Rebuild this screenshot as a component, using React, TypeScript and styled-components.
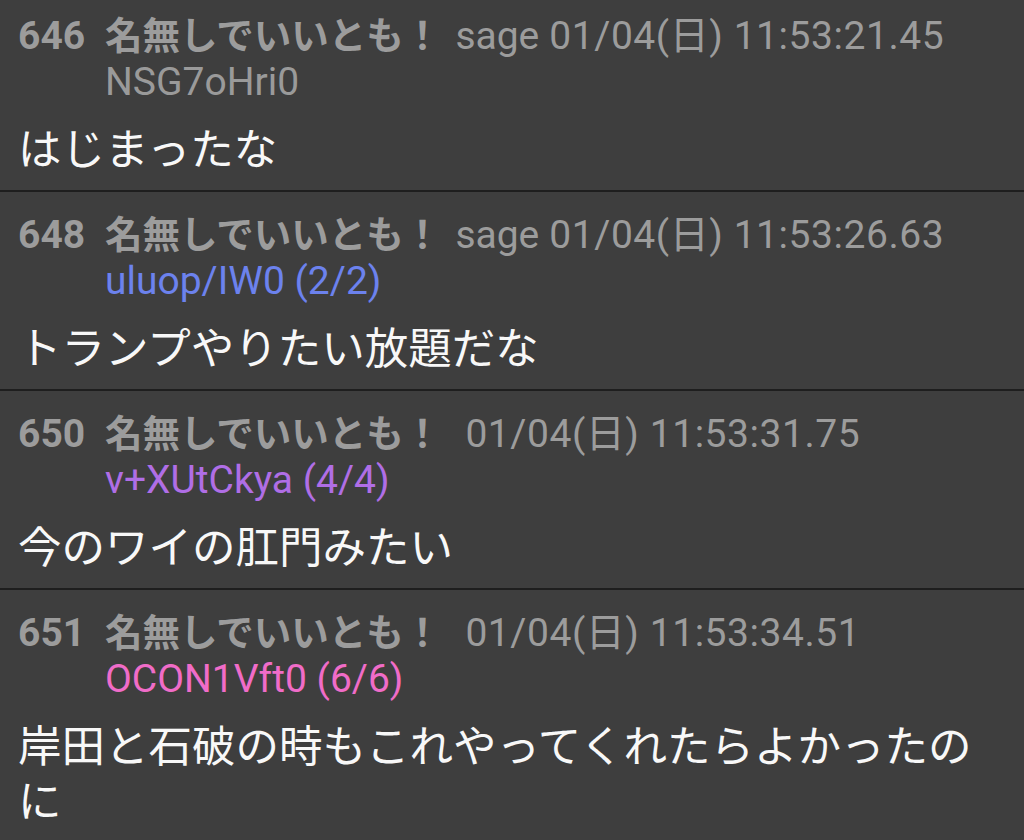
import React from 'react';
import styled, { createGlobalStyle } from 'styled-components';

const GlobalStyle = createGlobalStyle`
  html, body {
    margin: 0;
    padding: 0;
    background: #3e3e3e;
    overflow: hidden;
  }
  body {
    font-family: Roboto, 'Noto Sans CJK JP', sans-serif;
  }
`;

type Post = {
  no: number;
  name: string;
  mail?: string;
  date: string;
  id: string;
  count?: string;
  idColor: string;
  body: string;
};

const posts: Post[] = [
  {
    no: 646,
    name: '名無しでいいとも！',
    mail: 'sage',
    date: '01/04(日) 11:53:21.45',
    id: 'NSG7oHri0',
    idColor: '#9a9a9a',
    body: 'はじまったな',
  },
  {
    no: 648,
    name: '名無しでいいとも！',
    mail: 'sage',
    date: '01/04(日) 11:53:26.63',
    id: 'uluop/IW0',
    count: '(2/2)',
    idColor: '#6c82ee',
    body: 'トランプやりたい放題だな',
  },
  {
    no: 650,
    name: '名無しでいいとも！',
    date: '01/04(日) 11:53:31.75',
    id: 'v+XUtCkya',
    count: '(4/4)',
    idColor: '#b06ee6',
    body: '今のワイの肛門みたい',
  },
  {
    no: 651,
    name: '名無しでいいとも！',
    date: '01/04(日) 11:53:34.51',
    id: 'OCON1Vft0',
    count: '(6/6)',
    idColor: '#f06cc8',
    body: '岸田と石破の時もこれやってくれたらよかったのに',
  },
];

const App = () => {
  return (
    <>
      <GlobalStyle />
      <Thread>
        {posts.map((p) => (
          <PostItem key={p.no}>
            <Header>
              <Number>{p.no}</Number>
              <Name>{p.name}</Name>
              {p.mail && <Mail>{p.mail}</Mail>}
              <DateText $noMail={!p.mail}>{p.date}</DateText>
            </Header>
            <IdLine $color={p.idColor}>
              {p.id}
              {p.count && ` ${p.count}`}
            </IdLine>
            <Body>{p.body}</Body>
          </PostItem>
        ))}
      </Thread>
    </>
  );
};

export const Thread = styled.div`
  margin-top: -7px;
  display: flex;
  flex-direction: column;
`;

export const PostItem = styled.div`
  padding: 15px 18px 16px;
  border-bottom: 2px solid #1e1e1e;
`;

export const Header = styled.div`
  display: flex;
  align-items: baseline;
  height: 50px;
  line-height: 50px;
  font-size: 39px;
  color: #9c9c9c;
  white-space: nowrap;
`;

export const Number = styled.span`
  font-weight: 700;
  width: 87px;
`;

export const Name = styled.span`
  font-weight: 700;
  font-size: 37.5px;
  font-family: 'Noto Sans CJK JP', sans-serif;
`;

export const Mail = styled.span`
  margin-left: 14px;
`;

export const DateText = styled.span<{ $noMail?: boolean }>`
  margin-left: ${(p) => (p.$noMail ? '24px' : '10px')};
  letter-spacing: 0.55px;
`;

export const IdLine = styled.div<{ $color: string }>`
  padding-left: 87px;
  height: 48px;
  line-height: 48px;
  font-size: 39px;
  color: ${(p) => p.$color};
`;

export const Body = styled.div`
  margin-top: 13px;
  font-family: 'Noto Sans CJK JP', sans-serif;
  font-size: 43.5px;
  line-height: 55px;
  color: #f8f8f8;
`;

export default App;
